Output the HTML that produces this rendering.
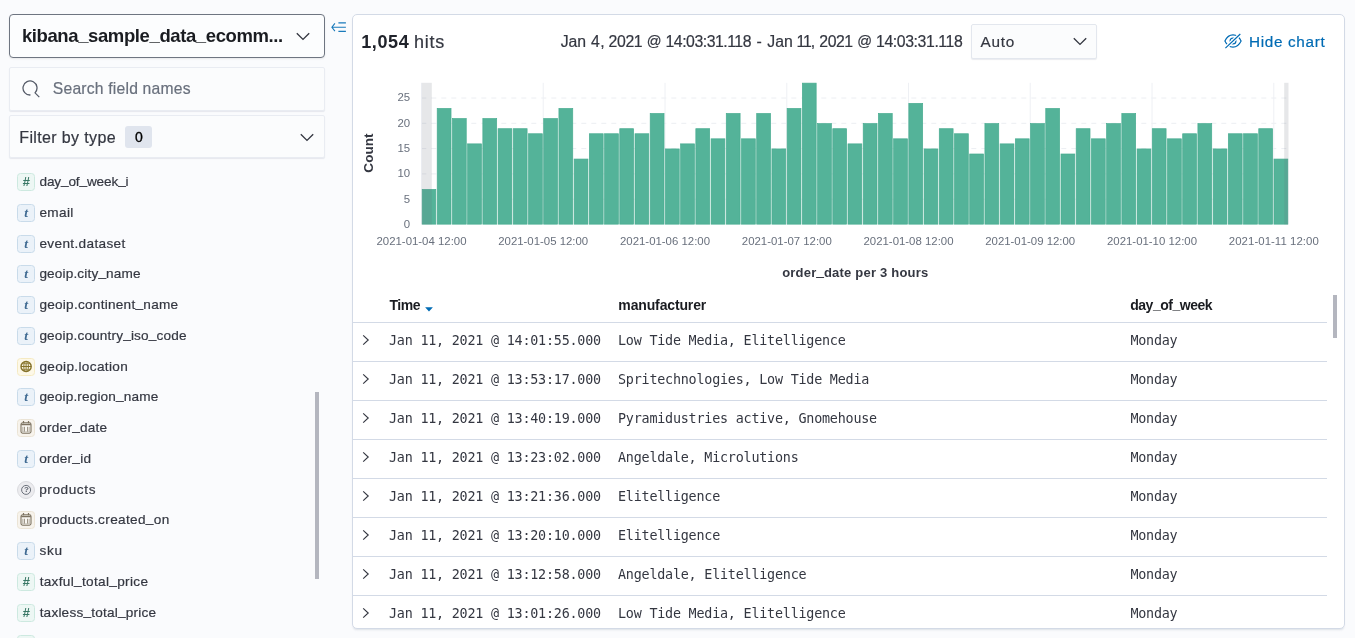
<!DOCTYPE html>
<html lang="en"><head><meta charset="utf-8"><title>Discover</title>
<style>
*{box-sizing:border-box;margin:0;padding:0}
html,body{width:1355px;height:638px;overflow:hidden;background:#fafbfd;font-family:"Liberation Sans",sans-serif;color:#343741}
body{position:relative}
.app{position:absolute;left:0;top:0;width:1355px;height:638px;overflow:hidden;will-change:transform}
.ip{position:absolute;left:9px;top:14px;width:316px;height:44px;background:#fcfdfe;border:1px solid #6e7581;border-radius:4px;box-shadow:0 1px 2px rgba(0,0,0,.08)}
.iptxt{position:absolute;top:10px;font-size:18.5px;font-weight:bold;color:#1a1c21;white-space:nowrap}
.chev{position:absolute}
.search{position:absolute;left:9px;top:67px;width:316px;height:43.5px;background:#fbfcfd;border:1px solid #e9ecf2;border-radius:2px;box-shadow:0 1px 1px rgba(152,162,179,.2)}
.mag{position:absolute;left:11.6px;top:11.5px}
.ph{position:absolute;top:12px;font-size:15.7px;color:#69707d;white-space:nowrap}
.filter{position:absolute;left:9px;top:115px;width:316px;height:43px;background:#fbfcfd;border:1px solid #e9ecf2;border-radius:2px;box-shadow:0 1px 1px rgba(152,162,179,.2)}
.ftxt{position:absolute;top:13px;font-size:16px;color:#343741;white-space:nowrap}
.badge{position:absolute;left:115.3px;top:9.7px;width:27px;height:22px;border-radius:3px;background:#e0e5ee;font-size:14px;font-weight:normal;-webkit-text-stroke:0.35px #000;text-align:center;line-height:22px;color:#000}
.fld{position:absolute;left:17.2px;height:20px;white-space:nowrap}
.tok{position:absolute;left:0;top:1px;width:18px;height:18px;border-radius:3.5px;font-size:11px;text-align:center;line-height:16px;border:1px solid}
.tn{background:#edf7f4;border-color:#cde9e0;color:#387765;font-weight:bold;font-style:italic;font-size:13px;line-height:15.5px}
.tt{background:#ebf2f9;border-color:#c9dbea;color:#3f6a92;font-family:"Liberation Serif",serif;font-style:italic;font-weight:bold;font-size:13.5px;line-height:15px}
.tg{background:#fdf8e8;border-color:#f5eac3}
.td{background:#f7f3ec;border-color:#ebe4d6}
.tq{background:#ececef;border-color:#d9dade;border-radius:9px}
.tok svg{position:absolute;left:-1px;top:-1px}
.qm{position:absolute;left:0.2px;top:0;width:16px;text-align:center;font-size:8px;font-weight:bold;line-height:15.8px;color:#5e646f}
.fn{position:absolute;top:1.6px;font-size:13.6px;color:#343741;-webkit-text-stroke:0.2px #343741}
.sbar{position:absolute;left:315px;top:392px;width:4px;height:187px;background:#b4b6bf}
.collapse{position:absolute;left:330.5px;top:21px}
.panel{position:absolute;left:352px;top:14px;width:993px;height:615px;background:#fff;border:1px solid #d3dae6;border-radius:5px;box-shadow:0 2px 2px -1px rgba(152,162,179,.3);overflow:hidden}
.hits{position:absolute;left:0;top:15.5px;font-size:18px;color:#343741;white-space:nowrap}
.hits b{position:absolute;color:#20232b}
.hits span{position:absolute}
.range{position:absolute;left:0;top:16.6px;font-size:15.8px;color:#343741;white-space:nowrap}
.range span{position:absolute;top:0}
.auto{position:absolute;left:618px;top:8.3px;width:125.5px;height:35.2px;background:#fbfcfd;border:1px solid #e3e7ee;border-radius:2px;box-shadow:0 1px 1px rgba(152,162,179,.2)}
.auto span{position:absolute;top:7.5px;font-size:15.3px;color:#343741}
.hide{position:absolute;left:870.5px;top:15.9px;color:#006bb4;font-size:15.3px;white-space:nowrap}
.hide svg{position:absolute;left:0;top:1.6px}
.hide span{position:absolute;top:1.2px}
.chart{position:absolute;left:-1px;top:-1px}
.ax{font-size:11.4px;fill:#69707d;font-family:"Liberation Sans",sans-serif}
.axt{font-size:13px;font-weight:bold;fill:#343741;font-family:"Liberation Sans",sans-serif}
.th{position:absolute;font-size:14px;font-weight:bold;color:#1a1c21;white-space:nowrap}
.sort{position:absolute}
.hl{position:absolute;left:0;width:974px;height:1px;background:#d3dae6}
.row{position:absolute;left:0;width:974px;height:38px;font-family:"DejaVu Sans Mono","Liberation Mono",monospace;font-size:13.4px;letter-spacing:-0.215px;color:#343741;white-space:nowrap}
.rc{position:absolute;left:9.3px;top:11.3px}
.c1{position:absolute;left:36px;top:10px}
.c2{position:absolute;left:265px;top:10px}
.c3{position:absolute;left:777.4px;top:10px}
.rl{position:absolute;left:0;width:974px;height:1px;background:#d3dae6}
.tbar{position:absolute;left:980.3px;top:278.5px;width:3.8px;height:43px;background:#b4b6bf}

.u{position:relative;top:-1.2px}
.iptxt .u{top:-0.6px}
.th .u{top:-0.7px}
.ftxt,.range span,.auto span,#hitss{-webkit-text-stroke:0.2px #343741}
.ph{-webkit-text-stroke:0.2px #69707d}
.hide span{-webkit-text-stroke:0.2px #006bb4}
.pin{position:absolute;left:0;top:1px;width:991px;height:611px}

</style></head>
<body>
<div class="app">
<div class="ip"><span id="iptxt" class="iptxt" style="letter-spacing:-0.391px;left:11.89px">kibana<span class="u">_</span>sample<span class="u">_</span>data<span class="u">_</span>ecomm...</span><svg class="chev" style="left:285.6px;top:16.8px" width="14" height="9" viewBox="0 0 14 9"><path d="M0.8 1.2 L7 7.4 L13.2 1.2" fill="none" stroke="#343741" stroke-width="1.35"/></svg></div>
<div class="search"><svg class="mag" width="18" height="18" viewBox="0 0 18 18"><path d="M8.49 14.98 A7.0 7.0 0 1 1 13.04 12.86 L17.30 17.10" fill="none" stroke="#535966" stroke-width="1.25"/></svg><span id="ph" class="ph" style="letter-spacing:0.199px;left:42.83px">Search field names</span></div>
<div class="filter"><span id="ftxt" class="ftxt" style="letter-spacing:0.362px;left:9.29px">Filter by type</span><span class="badge">0</span><svg class="chev" style="left:290.3px;top:17.0px" width="14" height="9" viewBox="0 0 14 9"><path d="M0.8 1.2 L7 7.4 L13.2 1.2" fill="none" stroke="#343741" stroke-width="1.35"/></svg></div>
<div class="fld" style="top:172px"><span class="tok tn">#</span><span id="f0" class="fn" style="letter-spacing:-0.140px;left:22.35px">day<span class="u">_</span>of<span class="u">_</span>week<span class="u">_</span>i</span></div>
<div class="fld" style="top:203px"><span class="tok tt">t</span><span id="f1" class="fn" style="letter-spacing:0.354px;left:22.28px">email</span></div>
<div class="fld" style="top:234px"><span class="tok tt">t</span><span id="f2" class="fn" style="letter-spacing:0.348px;left:22.28px">event.dataset</span></div>
<div class="fld" style="top:264px"><span class="tok tt">t</span><span id="f3" class="fn" style="letter-spacing:0.157px;left:22.19px">geoip.city<span class="u">_</span>name</span></div>
<div class="fld" style="top:295px"><span class="tok tt">t</span><span id="f4" class="fn" style="letter-spacing:0.259px;left:22.19px">geoip.continent<span class="u">_</span>name</span></div>
<div class="fld" style="top:326px"><span class="tok tt">t</span><span id="f5" class="fn" style="letter-spacing:0.167px;left:22.19px">geoip.country<span class="u">_</span>iso<span class="u">_</span>code</span></div>
<div class="fld" style="top:357px"><span class="tok tg"><svg width="18" height="18" viewBox="0 0 18 18"><circle cx="9.1" cy="8.5" r="5.1" fill="none" stroke="#857229" stroke-width="1.4"/><ellipse cx="9.1" cy="8.5" rx="2.3" ry="5.1" fill="none" stroke="#857229" stroke-width="1"/><path d="M4 8.5 H14.2 M9.1 3.4 V13.6" stroke="#857229" stroke-width="1" fill="none"/><path d="M5.2 5.6 H13 M5.2 11.4 H13" stroke="#857229" stroke-width="0.8" fill="none" opacity="0.75"/></svg></span><span id="f6" class="fn" style="letter-spacing:0.343px;left:22.19px">geoip.location</span></div>
<div class="fld" style="top:387px"><span class="tok tt">t</span><span id="f7" class="fn" style="letter-spacing:0.150px;left:22.19px">geoip.region<span class="u">_</span>name</span></div>
<div class="fld" style="top:418px"><span class="tok td"><svg width="18" height="18" viewBox="0 0 18 18"><rect x="4" y="3.8" width="10" height="10.4" rx="1.6" fill="#faf8f3" stroke="#7d7361" stroke-width="1.1"/><path d="M4.2 5.5 H13.8" stroke="#7d7361" stroke-width="1.5" fill="none"/><path d="M6.5 2 V4.2 M11.5 2 V4.2" stroke="#7d7361" stroke-width="1.2" fill="none"/><path d="M7.3 7.8 V12.6 M10.7 7.8 V12.6" stroke="#7d7361" stroke-width="0.9" fill="none"/><path d="M5.6 7.8 V12.6 M12.4 7.8 V12.6 M5.2 12.9 H12.8" stroke="#7d7361" stroke-width="0.6" fill="none" opacity="0.7"/></svg></span><span id="f8" class="fn" style="letter-spacing:0.229px;left:22.08px">order<span class="u">_</span>date</span></div>
<div class="fld" style="top:449px"><span class="tok tt">t</span><span id="f9" class="fn" style="letter-spacing:0.262px;left:22.08px">order<span class="u">_</span>id</span></div>
<div class="fld" style="top:480px"><span class="tok tq"><svg width="18" height="18" viewBox="0 0 18 18"><circle cx="9.1" cy="8.9" r="4.5" fill="none" stroke="#5e646f" stroke-width="0.9"/></svg><span class="qm">?</span></span><span id="f10" class="fn" style="letter-spacing:0.592px;left:21.96px">products</span></div>
<div class="fld" style="top:510px"><span class="tok td"><svg width="18" height="18" viewBox="0 0 18 18"><rect x="4" y="3.8" width="10" height="10.4" rx="1.6" fill="#faf8f3" stroke="#7d7361" stroke-width="1.1"/><path d="M4.2 5.5 H13.8" stroke="#7d7361" stroke-width="1.5" fill="none"/><path d="M6.5 2 V4.2 M11.5 2 V4.2" stroke="#7d7361" stroke-width="1.2" fill="none"/><path d="M7.3 7.8 V12.6 M10.7 7.8 V12.6" stroke="#7d7361" stroke-width="0.9" fill="none"/><path d="M5.6 7.8 V12.6 M12.4 7.8 V12.6 M5.2 12.9 H12.8" stroke="#7d7361" stroke-width="0.6" fill="none" opacity="0.7"/></svg></span><span id="f11" class="fn" style="letter-spacing:0.341px;left:21.96px">products.created<span class="u">_</span>on</span></div>
<div class="fld" style="top:541px"><span class="tok tt">t</span><span id="f12" class="fn" style="letter-spacing:0.625px;left:22.35px">sku</span></div>
<div class="fld" style="top:572px"><span class="tok tn">#</span><span id="f13" class="fn" style="letter-spacing:0.326px;left:22.45px">taxful<span class="u">_</span>total<span class="u">_</span>price</span></div>
<div class="fld" style="top:603px"><span class="tok tn">#</span><span id="f14" class="fn" style="letter-spacing:0.208px;left:22.45px">taxless<span class="u">_</span>total<span class="u">_</span>price</span></div>
<div class="fld" style="top:634px"><span class="tok tn">#</span><span id="f15" class="fn" style="letter-spacing:0.000px;left:22.00px">total<span class="u">_</span>quantity</span></div>
<div class="sbar"></div>
<svg class="collapse" width="17" height="13" viewBox="0 0 17 13"><path d="M3.9 2.4 L0.9 6.25 L3.9 10.1 M1 6.25 H14.9 M7.4 1.9 H14.9 M7.4 10.4 H14.9" fill="none" stroke="#006bb4" stroke-width="1.1" opacity="0.9"/></svg>
<div class="panel"><div class="pin">
<div class="hits"><b id="hitsb" style="letter-spacing:0.614px;left:8.22px">1,054</b><span id="hitss" style="letter-spacing:0.769px;left:61.04px">hits</span></div>
<div class="range"><span id="r0" style="letter-spacing:-0.177px;left:207.80px">Jan</span> <span id="r1" style="letter-spacing:0.572px;left:237.90px">4,</span> <span id="r2" style="letter-spacing:-0.393px;left:255.60px">2021</span> <span id="r3" style="letter-spacing:0.000px;left:293.77px;font-size:14.6px;top:0.6px">@</span> <span id="r4" style="letter-spacing:-0.467px;left:312.56px">14:03:31.118</span> <span id="r5" style="letter-spacing:0.000px;left:403.50px">-</span> <span id="r6" style="letter-spacing:0.000px;left:414.30px">Jan</span> <span id="r7" style="letter-spacing:-1.127px;left:443.56px">11,</span> <span id="r8" style="letter-spacing:-0.429px;left:466.30px">2021</span> <span id="r9" style="letter-spacing:0.000px;left:504.29px;font-size:14.6px;top:0.6px">@</span> <span id="r10" style="letter-spacing:-0.395px;left:523.06px">14:03:31.118</span></div>
<div class="auto"><span id="auto" style="letter-spacing:0.785px;left:8.46px">Auto</span><svg class="chev" style="left:100.8px;top:12.0px" width="14" height="9" viewBox="0 0 14 9"><path d="M0.8 1.2 L7 7.4 L13.2 1.2" fill="none" stroke="#343741" stroke-width="1.35"/></svg></div>
<div class="hide"><svg width="18" height="16" viewBox="0 0 18 16"><path d="M0.9 8 C3 3.6 6 1.9 9 1.9 C12 1.9 15 3.6 17.1 8 C15 12.4 12 14.1 9 14.1 C6 14.1 3 12.4 0.9 8 Z" fill="none" stroke="#006bb4" stroke-width="1.2"/><circle cx="9" cy="8" r="2.9" fill="none" stroke="#006bb4" stroke-width="1.2"/><path d="M16.3 1 L1.4 15.1" stroke="#fff" stroke-width="3.6"/><path d="M16.3 1 L1.4 15.1" stroke="#006bb4" stroke-width="1.2"/></svg><span id="hide" style="letter-spacing:0.655px;left:25.59px">Hide chart</span></div>
<svg class="chart" width="993" height="275" viewBox="352.0 15 993 275">
<line x1="421.3" y1="199.2" x2="1288.5" y2="199.2" stroke="#eceef2" stroke-width="1" stroke-dasharray="5 5"/>
<line x1="421.3" y1="173.9" x2="1288.5" y2="173.9" stroke="#eceef2" stroke-width="1" stroke-dasharray="5 5"/>
<line x1="421.3" y1="148.6" x2="1288.5" y2="148.6" stroke="#eceef2" stroke-width="1" stroke-dasharray="5 5"/>
<line x1="421.3" y1="123.3" x2="1288.5" y2="123.3" stroke="#eceef2" stroke-width="1" stroke-dasharray="5 5"/>
<line x1="421.3" y1="98.0" x2="1288.5" y2="98.0" stroke="#eceef2" stroke-width="1" stroke-dasharray="5 5"/>
<line x1="421.5" y1="82.8" x2="421.5" y2="224.5" stroke="#eef0f4" stroke-width="1"/>
<line x1="543.2" y1="82.8" x2="543.2" y2="224.5" stroke="#eef0f4" stroke-width="1"/>
<line x1="665.0" y1="82.8" x2="665.0" y2="224.5" stroke="#eef0f4" stroke-width="1"/>
<line x1="786.8" y1="82.8" x2="786.8" y2="224.5" stroke="#eef0f4" stroke-width="1"/>
<line x1="908.5" y1="82.8" x2="908.5" y2="224.5" stroke="#eef0f4" stroke-width="1"/>
<line x1="1030.2" y1="82.8" x2="1030.2" y2="224.5" stroke="#eef0f4" stroke-width="1"/>
<line x1="1152.0" y1="82.8" x2="1152.0" y2="224.5" stroke="#eef0f4" stroke-width="1"/>
<line x1="1273.8" y1="82.8" x2="1273.8" y2="224.5" stroke="#eef0f4" stroke-width="1"/>
<rect x="422.20" y="189.42" width="13.61" height="34.72" fill="#54b399" stroke="#48ac90" stroke-width="0.7"/>
<rect x="437.21" y="108.45" width="13.81" height="115.70" fill="#54b399" stroke="#48ac90" stroke-width="0.7"/>
<rect x="452.43" y="118.58" width="13.81" height="105.57" fill="#54b399" stroke="#48ac90" stroke-width="0.7"/>
<rect x="467.64" y="143.88" width="13.81" height="80.27" fill="#54b399" stroke="#48ac90" stroke-width="0.7"/>
<rect x="482.86" y="118.58" width="13.81" height="105.57" fill="#54b399" stroke="#48ac90" stroke-width="0.7"/>
<rect x="498.07" y="128.70" width="13.81" height="95.45" fill="#54b399" stroke="#48ac90" stroke-width="0.7"/>
<rect x="513.28" y="128.70" width="13.81" height="95.45" fill="#54b399" stroke="#48ac90" stroke-width="0.7"/>
<rect x="528.50" y="133.76" width="13.81" height="90.39" fill="#54b399" stroke="#48ac90" stroke-width="0.7"/>
<rect x="543.71" y="118.58" width="13.81" height="105.57" fill="#54b399" stroke="#48ac90" stroke-width="0.7"/>
<rect x="558.93" y="108.45" width="13.81" height="115.70" fill="#54b399" stroke="#48ac90" stroke-width="0.7"/>
<rect x="574.14" y="159.06" width="13.81" height="65.09" fill="#54b399" stroke="#48ac90" stroke-width="0.7"/>
<rect x="589.35" y="133.76" width="13.81" height="90.39" fill="#54b399" stroke="#48ac90" stroke-width="0.7"/>
<rect x="604.57" y="133.76" width="13.81" height="90.39" fill="#54b399" stroke="#48ac90" stroke-width="0.7"/>
<rect x="619.78" y="128.70" width="13.81" height="95.45" fill="#54b399" stroke="#48ac90" stroke-width="0.7"/>
<rect x="635.00" y="133.76" width="13.81" height="90.39" fill="#54b399" stroke="#48ac90" stroke-width="0.7"/>
<rect x="650.21" y="113.51" width="13.81" height="110.64" fill="#54b399" stroke="#48ac90" stroke-width="0.7"/>
<rect x="665.42" y="148.94" width="13.81" height="75.21" fill="#54b399" stroke="#48ac90" stroke-width="0.7"/>
<rect x="680.64" y="143.88" width="13.81" height="80.27" fill="#54b399" stroke="#48ac90" stroke-width="0.7"/>
<rect x="695.85" y="128.70" width="13.81" height="95.45" fill="#54b399" stroke="#48ac90" stroke-width="0.7"/>
<rect x="711.07" y="138.82" width="13.81" height="85.33" fill="#54b399" stroke="#48ac90" stroke-width="0.7"/>
<rect x="726.28" y="113.51" width="13.81" height="110.64" fill="#54b399" stroke="#48ac90" stroke-width="0.7"/>
<rect x="741.49" y="138.82" width="13.81" height="85.33" fill="#54b399" stroke="#48ac90" stroke-width="0.7"/>
<rect x="756.71" y="113.51" width="13.81" height="110.64" fill="#54b399" stroke="#48ac90" stroke-width="0.7"/>
<rect x="771.92" y="148.94" width="13.81" height="75.21" fill="#54b399" stroke="#48ac90" stroke-width="0.7"/>
<rect x="787.14" y="108.45" width="13.81" height="115.70" fill="#54b399" stroke="#48ac90" stroke-width="0.7"/>
<rect x="802.35" y="83.15" width="13.81" height="141.00" fill="#54b399" stroke="#48ac90" stroke-width="0.7"/>
<rect x="817.56" y="123.64" width="13.81" height="100.51" fill="#54b399" stroke="#48ac90" stroke-width="0.7"/>
<rect x="832.78" y="128.70" width="13.81" height="95.45" fill="#54b399" stroke="#48ac90" stroke-width="0.7"/>
<rect x="847.99" y="143.88" width="13.81" height="80.27" fill="#54b399" stroke="#48ac90" stroke-width="0.7"/>
<rect x="863.21" y="123.64" width="13.81" height="100.51" fill="#54b399" stroke="#48ac90" stroke-width="0.7"/>
<rect x="878.42" y="113.51" width="13.81" height="110.64" fill="#54b399" stroke="#48ac90" stroke-width="0.7"/>
<rect x="893.63" y="138.82" width="13.81" height="85.33" fill="#54b399" stroke="#48ac90" stroke-width="0.7"/>
<rect x="908.85" y="103.39" width="13.81" height="120.76" fill="#54b399" stroke="#48ac90" stroke-width="0.7"/>
<rect x="924.06" y="148.94" width="13.81" height="75.21" fill="#54b399" stroke="#48ac90" stroke-width="0.7"/>
<rect x="939.28" y="128.70" width="13.81" height="95.45" fill="#54b399" stroke="#48ac90" stroke-width="0.7"/>
<rect x="954.49" y="133.76" width="13.81" height="90.39" fill="#54b399" stroke="#48ac90" stroke-width="0.7"/>
<rect x="969.70" y="154.00" width="13.81" height="70.15" fill="#54b399" stroke="#48ac90" stroke-width="0.7"/>
<rect x="984.92" y="123.64" width="13.81" height="100.51" fill="#54b399" stroke="#48ac90" stroke-width="0.7"/>
<rect x="1000.13" y="143.88" width="13.81" height="80.27" fill="#54b399" stroke="#48ac90" stroke-width="0.7"/>
<rect x="1015.35" y="138.82" width="13.81" height="85.33" fill="#54b399" stroke="#48ac90" stroke-width="0.7"/>
<rect x="1030.56" y="123.64" width="13.81" height="100.51" fill="#54b399" stroke="#48ac90" stroke-width="0.7"/>
<rect x="1045.77" y="108.45" width="13.81" height="115.70" fill="#54b399" stroke="#48ac90" stroke-width="0.7"/>
<rect x="1060.99" y="154.00" width="13.81" height="70.15" fill="#54b399" stroke="#48ac90" stroke-width="0.7"/>
<rect x="1076.20" y="128.70" width="13.81" height="95.45" fill="#54b399" stroke="#48ac90" stroke-width="0.7"/>
<rect x="1091.42" y="138.82" width="13.81" height="85.33" fill="#54b399" stroke="#48ac90" stroke-width="0.7"/>
<rect x="1106.63" y="123.64" width="13.81" height="100.51" fill="#54b399" stroke="#48ac90" stroke-width="0.7"/>
<rect x="1121.84" y="113.51" width="13.81" height="110.64" fill="#54b399" stroke="#48ac90" stroke-width="0.7"/>
<rect x="1137.06" y="148.94" width="13.81" height="75.21" fill="#54b399" stroke="#48ac90" stroke-width="0.7"/>
<rect x="1152.27" y="128.70" width="13.81" height="95.45" fill="#54b399" stroke="#48ac90" stroke-width="0.7"/>
<rect x="1167.49" y="138.82" width="13.81" height="85.33" fill="#54b399" stroke="#48ac90" stroke-width="0.7"/>
<rect x="1182.70" y="133.76" width="13.81" height="90.39" fill="#54b399" stroke="#48ac90" stroke-width="0.7"/>
<rect x="1197.91" y="123.64" width="13.81" height="100.51" fill="#54b399" stroke="#48ac90" stroke-width="0.7"/>
<rect x="1213.13" y="148.94" width="13.81" height="75.21" fill="#54b399" stroke="#48ac90" stroke-width="0.7"/>
<rect x="1228.34" y="133.76" width="13.81" height="90.39" fill="#54b399" stroke="#48ac90" stroke-width="0.7"/>
<rect x="1243.56" y="133.76" width="13.81" height="90.39" fill="#54b399" stroke="#48ac90" stroke-width="0.7"/>
<rect x="1258.77" y="128.70" width="13.81" height="95.45" fill="#54b399" stroke="#48ac90" stroke-width="0.7"/>
<rect x="1273.98" y="159.06" width="13.81" height="65.09" fill="#54b399" stroke="#48ac90" stroke-width="0.7"/>
<rect x="421.85" y="82.8" width="9.95" height="141.7" fill="#69707d" fill-opacity="0.17"/>
<rect x="1284.2" y="82.8" width="4.3" height="141.7" fill="#69707d" fill-opacity="0.17"/>
<text x="410.2" y="228.15" text-anchor="end" class="ax">0</text>
<text x="410.2" y="202.75" text-anchor="end" class="ax">5</text>
<text x="410.2" y="177.35" text-anchor="end" class="ax">10</text>
<text x="410.2" y="151.95" text-anchor="end" class="ax">15</text>
<text x="410.2" y="126.55" text-anchor="end" class="ax">20</text>
<text x="410.2" y="101.15" text-anchor="end" class="ax">25</text>
<text x="376.5" y="245.0" textLength="90.0" lengthAdjust="spacing" class="ax">2021-01-04 12:00</text>
<text x="498.2" y="245.0" textLength="90.0" lengthAdjust="spacing" class="ax">2021-01-05 12:00</text>
<text x="620.0" y="245.0" textLength="90.0" lengthAdjust="spacing" class="ax">2021-01-06 12:00</text>
<text x="741.8" y="245.0" textLength="90.0" lengthAdjust="spacing" class="ax">2021-01-07 12:00</text>
<text x="863.5" y="245.0" textLength="90.0" lengthAdjust="spacing" class="ax">2021-01-08 12:00</text>
<text x="985.2" y="245.0" textLength="90.0" lengthAdjust="spacing" class="ax">2021-01-09 12:00</text>
<text x="1107.0" y="245.0" textLength="90.0" lengthAdjust="spacing" class="ax">2021-01-10 12:00</text>
<text x="1228.8" y="245.0" textLength="90.0" lengthAdjust="spacing" class="ax">2021-01-11 12:00</text>
<text transform="translate(372.8,153) rotate(-90)" text-anchor="middle" class="axt" style="font-size:13.6px">Count</text>
<text x="782.2" y="276.9" textLength="146.0" lengthAdjust="spacing" class="axt">order<tspan dy="-1" stroke="#343741" stroke-width="0.5">_</tspan><tspan dy="1">date per 3 hours</tspan></text>
</svg>
<div id="th1" class="th" style="top:280.8px;letter-spacing:-0.434px;left:36.38px">Time</div><svg class="sort" style="left:71.9px;top:290.5px" width="8" height="5" viewBox="0 0 8 5"><path d="M0.1 0.2 H7.9 L4 4.5 Z" fill="#006bb4"/></svg>
<div id="th2" class="th" style="top:280.8px;letter-spacing:-0.145px;left:265.37px">manufacturer</div>
<div id="th3" class="th" style="top:280.8px;letter-spacing:-0.471px;left:777.16px">day<span class="u">_</span>of<span class="u">_</span>week</div>
<div class="hl" style="top:306px"></div>
<div class="row" style="top:307.0px"><svg class="rc" width="8" height="12" viewBox="0 0 8 12"><path d="M1.2 1.4 L6.2 6 L1.2 10.6" fill="none" stroke="#343741" stroke-width="1.15"/></svg><span class="c1">Jan 11, 2021 @ 14:01:55.000</span><span class="c2">Low Tide Media, Elitelligence</span><span class="c3">Monday</span></div>
<div class="rl" style="top:345.0px"></div>
<div class="row" style="top:346.0px"><svg class="rc" width="8" height="12" viewBox="0 0 8 12"><path d="M1.2 1.4 L6.2 6 L1.2 10.6" fill="none" stroke="#343741" stroke-width="1.15"/></svg><span class="c1">Jan 11, 2021 @ 13:53:17.000</span><span class="c2">Spritechnologies, Low Tide Media</span><span class="c3">Monday</span></div>
<div class="rl" style="top:384.0px"></div>
<div class="row" style="top:385.0px"><svg class="rc" width="8" height="12" viewBox="0 0 8 12"><path d="M1.2 1.4 L6.2 6 L1.2 10.6" fill="none" stroke="#343741" stroke-width="1.15"/></svg><span class="c1">Jan 11, 2021 @ 13:40:19.000</span><span class="c2">Pyramidustries active, Gnomehouse</span><span class="c3">Monday</span></div>
<div class="rl" style="top:423.0px"></div>
<div class="row" style="top:424.0px"><svg class="rc" width="8" height="12" viewBox="0 0 8 12"><path d="M1.2 1.4 L6.2 6 L1.2 10.6" fill="none" stroke="#343741" stroke-width="1.15"/></svg><span class="c1">Jan 11, 2021 @ 13:23:02.000</span><span class="c2">Angeldale, Microlutions</span><span class="c3">Monday</span></div>
<div class="rl" style="top:462.0px"></div>
<div class="row" style="top:463.0px"><svg class="rc" width="8" height="12" viewBox="0 0 8 12"><path d="M1.2 1.4 L6.2 6 L1.2 10.6" fill="none" stroke="#343741" stroke-width="1.15"/></svg><span class="c1">Jan 11, 2021 @ 13:21:36.000</span><span class="c2">Elitelligence</span><span class="c3">Monday</span></div>
<div class="rl" style="top:501.0px"></div>
<div class="row" style="top:502.0px"><svg class="rc" width="8" height="12" viewBox="0 0 8 12"><path d="M1.2 1.4 L6.2 6 L1.2 10.6" fill="none" stroke="#343741" stroke-width="1.15"/></svg><span class="c1">Jan 11, 2021 @ 13:20:10.000</span><span class="c2">Elitelligence</span><span class="c3">Monday</span></div>
<div class="rl" style="top:540.0px"></div>
<div class="row" style="top:541.0px"><svg class="rc" width="8" height="12" viewBox="0 0 8 12"><path d="M1.2 1.4 L6.2 6 L1.2 10.6" fill="none" stroke="#343741" stroke-width="1.15"/></svg><span class="c1">Jan 11, 2021 @ 13:12:58.000</span><span class="c2">Angeldale, Elitelligence</span><span class="c3">Monday</span></div>
<div class="rl" style="top:579.0px"></div>
<div class="row" style="top:580.0px"><svg class="rc" width="8" height="12" viewBox="0 0 8 12"><path d="M1.2 1.4 L6.2 6 L1.2 10.6" fill="none" stroke="#343741" stroke-width="1.15"/></svg><span class="c1">Jan 11, 2021 @ 13:01:26.000</span><span class="c2">Low Tide Media, Elitelligence</span><span class="c3">Monday</span></div>
<div class="rl" style="top:618.0px"></div>
<div class="tbar"></div>
</div></div>
</div>
</body></html>
